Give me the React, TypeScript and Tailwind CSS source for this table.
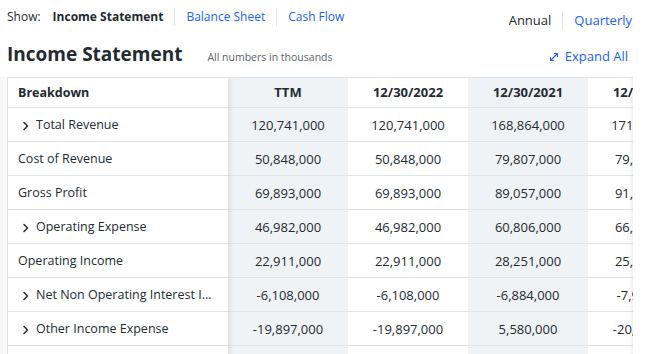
import React from 'react';

const columns = ['TTM', '12/30/2022', '12/30/2021', '12/30/2020'];

const rows: { label: string; expandable: boolean; values: string[] }[] = [
    { label: 'Total Revenue', expandable: true, values: ['120,741,000', '120,741,000', '168,864,000', '171,760,000'] },
    { label: 'Cost of Revenue', expandable: false, values: ['50,848,000', '50,848,000', '79,807,000', '79,732,000'] },
    { label: 'Gross Profit', expandable: false, values: ['69,893,000', '69,893,000', '89,057,000', '91,028,000'] },
    { label: 'Operating Expense', expandable: true, values: ['46,982,000', '46,982,000', '60,806,000', '66,014,000'] },
    { label: 'Operating Income', expandable: false, values: ['22,911,000', '22,911,000', '28,251,000', '25,014,000'] },
    { label: 'Net Non Operating Interest I...', expandable: true, values: ['-6,108,000', '-6,108,000', '-6,884,000', '-7,952,000'] },
    { label: 'Other Income Expense', expandable: true, values: ['-19,897,000', '-19,897,000', '5,580,000', '-20,081,000'] },
    // next row is only partly scrolled into view
    { label: '', expandable: false, values: ['', '', '', ''] },
];

const Chevron = () => (
    <svg width="8" height="10" viewBox="0 0 8 10" className="mr-[6px] shrink-0">
        <path d="M2 1.5 L5.5 5 L2 8.5" fill="none" stroke="#232a31" strokeWidth="1.5" strokeLinecap="round" strokeLinejoin="round" />
    </svg>
);

const ExpandIcon = () => (
    <svg width="12" height="12" viewBox="0 0 24 24" fill="none" stroke="currentColor" strokeWidth="2.2" strokeLinecap="round" strokeLinejoin="round">
        <path d="M11 19H5v-6" />
        <path d="M13 5h6v6" />
        <path d="M19 5 5 19" />
    </svg>
);

const colBg = (i: number) => (i % 2 === 0 ? 'bg-[#f0f3f5]' : 'bg-white');

export default function App() {
    return (
        <div className="w-[656px] h-[354px] overflow-hidden bg-white text-[#232a31] font-['Open_Sans',sans-serif]">
            {/* Top nav */}
            <div className="flex items-center justify-between h-[33px] pl-[7px] pr-[24px]">
                <div className="flex items-center text-[12px]">
                    <span className="mr-[12px]">Show:</span>
                    <span className="font-bold">Income Statement</span>
                    <span className="mx-[11px] h-[18px] w-px bg-[#e0e4e9]" />
                    <span className="text-[#1a5ff7]">Balance Sheet</span>
                    <span className="mx-[11px] h-[18px] w-px bg-[#e0e4e9]" />
                    <span className="text-[#1a5ff7]">Cash Flow</span>
                </div>
                <div className="flex items-center text-[13px] pt-[8px]">
                    <span>Annual</span>
                    <span className="mx-[11px] h-[18px] w-px bg-[#e0e4e9]" />
                    <span className="text-[#1a5ff7]">Quarterly</span>
                </div>
            </div>

            {/* Title row */}
            <div className="flex items-center justify-between h-[44px] pl-[7px] pr-[28px]">
                <div className="flex items-center">
                    <h1 className="text-[19px] font-bold leading-none -mt-[2px]">Income Statement</h1>
                    <span className="ml-[25px] mt-[5px] text-[10.5px] text-[#5b636a]">All numbers in thousands</span>
                </div>
                <div className="flex items-center gap-[5px] mt-[3px] text-[13px] text-[#1a5ff7]">
                    <ExpandIcon />
                    <span>Expand All</span>
                </div>
            </div>

            {/* Table */}
            <div className="flex">
                <div className="w-[7px] bg-gradient-to-r from-[#f5f5f5] to-[#fbfbfb]" />
                <div className="relative w-[626px] overflow-hidden border-t border-l border-[#e0e4e9]">
                    <div className="flex">
                        <div className="relative z-10 w-[220px] shrink-0 bg-white shadow-[3px_0_4px_rgba(0,0,0,0.06)]">
                            <div className="h-[30px] flex items-center pt-[1px] px-[10px] text-[12.5px] font-bold border-b border-[#e0e4e9]">Breakdown</div>
                            {rows.map((r, k) => (
                                <div key={k} className={`h-[34px] flex items-center pt-[2px] text-[12.5px] border-b border-[#e0e4e9] ${r.expandable ? 'pl-[14px]' : 'pl-[10px]'}`}>
                                    {r.expandable && <Chevron />}
                                    <span className="whitespace-nowrap">{r.label}</span>
                                </div>
                            ))}
                        </div>
                        {columns.map((c, i) => (
                            <div key={c} className={`w-[120px] shrink-0 ${colBg(i)}`}>
                                <div className="h-[30px] flex items-center justify-center pt-[1px] text-[13px] font-bold border-b border-[#e0e4e9] whitespace-nowrap">{c}</div>
                                {rows.map((r, k) => (
                                    <div key={k} className="h-[34px] flex items-center justify-center pt-[2px] text-[13px] border-b border-[#e0e4e9] whitespace-nowrap">
                                        {r.values[i]}
                                    </div>
                                ))}
                            </div>
                        ))}
                    </div>
                    <div className="absolute top-0 right-0 bottom-0 w-[4px] bg-gradient-to-r from-transparent to-[rgba(0,0,0,0.06)]" />
                </div>
            </div>
        </div>
    );
}
